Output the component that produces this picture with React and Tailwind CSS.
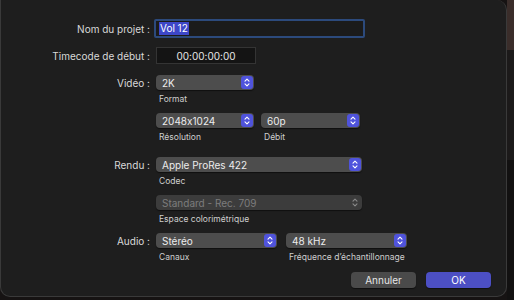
import React from 'react';

const font = { fontFamily: 'Inter, "Liberation Sans", sans-serif', fontFeatureSettings: '"calt" 0' };

// Petit bouton bleu avec les deux chevrons (haut / bas)
const Stepper = ({ disabled }) => (
  <span
    className={
      disabled
        ? 'w-[12px] h-[13px] flex items-center justify-center'
        : 'w-[12px] h-[13px] rounded-[3px] bg-[#4f53dc] flex items-center justify-center'
    }
  >
    <svg width="6" height="9" viewBox="0 0 6 9" fill="none">
      <path
        d="M1 3.2 L3 1.2 L5 3.2 M1 5.8 L3 7.8 L5 5.8"
        stroke={disabled ? '#8a8a8a' : '#ffffff'}
        strokeWidth="1.1"
        strokeLinecap="round"
        strokeLinejoin="round"
      />
    </svg>
  </span>
);

const Popup = ({ value, width, disabled }) => (
  <div
    className={`h-[15px] rounded-[4px] flex items-center justify-between pl-[6px] pr-[1px] shadow-[0_1px_1px_rgba(0,0,0,0.5)] ${width} ${
      disabled ? 'bg-[#3c3c3c]' : 'bg-[#4d4d4d]'
    }`}
  >
    <span className={`text-[10px] leading-none ${disabled ? 'text-[#7d7d7d]' : 'text-[#ececec]'}`}>
      {value}
    </span>
    <Stepper disabled={disabled} />
  </div>
);

const Caption = ({ children }) => (
  <div className="h-[9px] text-[8.5px] leading-[9px] text-[#cfcfcf] pl-[3px] mt-[5px]">{children}</div>
);

const Label = ({ children }) => (
  <div className="w-[150px] pr-[1px] text-right text-[10px] leading-none text-[#d9d9d9]">{children}</div>
);

export default function App() {
  return (
    <div className="w-[514px] h-[300px] bg-[#161313] flex" style={font}>
      <div className="w-[507px] h-[297px] bg-[#1e1e1e] rounded-b-[10px] rounded-tr-[10px] border-x border-b border-[#3a3a3a] flex flex-col shrink-0">
        {/* Nom du projet */}
        <div className="flex items-center gap-[3px] mt-[19px]">
          <Label>Nom du projet :</Label>
          <div className="w-[211px] h-[19px] border-2 border-[#2c4a7c] rounded-[2px] bg-[#1b1b1b] flex items-center pl-[3px]">
            <span className="bg-[#3d47c8] text-[10px] leading-[13px] text-white px-[1px]">Vol 12</span>
          </div>
        </div>

        {/* Timecode */}
        <div className="flex items-center gap-[5px] mt-[9px]">
          <Label>Timecode de début :</Label>
          <div className="w-[100px] h-[17px] border border-[#343434] bg-[#141414] flex items-center justify-center text-[10px] leading-none text-[#e6e6e6]">
            00:00:00:00
          </div>
        </div>

        {/* Vidéo */}
        <div className="flex mt-[11px] gap-[5px]">
          <div className="h-[15px] flex items-center">
            <Label>Vidéo :</Label>
          </div>
          <div className="flex flex-col">
            <Popup value="2K" width="w-[98px]" />
            <Caption>Format</Caption>
            <div className="flex gap-[7px] mt-[9px]">
              <div className="flex flex-col">
                <Popup value="2048x1024" width="w-[98px]" />
                <Caption>Résolution</Caption>
              </div>
              <div className="flex flex-col">
                <Popup value="60p" width="w-[99px]" />
                <Caption>Débit</Caption>
              </div>
            </div>
          </div>
        </div>

        {/* Rendu */}
        <div className="flex mt-[15px] gap-[5px]">
          <div className="h-[15px] flex items-center">
            <Label>Rendu :</Label>
          </div>
          <div className="flex flex-col">
            <Popup value="Apple ProRes 422" width="w-[206px]" />
            <Caption>Codec</Caption>
            <div className="mt-[9px] flex flex-col">
              <Popup value="Standard - Rec. 709" width="w-[206px]" disabled />
              <Caption>Espace colorimétrique</Caption>
            </div>
          </div>
        </div>

        {/* Audio */}
        <div className="flex mt-[9px] gap-[5px]">
          <div className="h-[15px] flex items-center">
            <Label>Audio :</Label>
          </div>
          <div className="flex gap-[9px]">
            <div className="flex flex-col">
              <Popup value="Stéréo" width="w-[121px]" />
              <Caption>Canaux</Caption>
            </div>
            <div className="flex flex-col">
              <Popup value="48 kHz" width="w-[121px]" />
              <Caption>Fréquence d’échantillonnage</Caption>
            </div>
          </div>
        </div>

        {/* Boutons */}
        <div className="flex justify-end gap-[10px] pr-[15px] mt-[10px]">
          <button className="w-[65px] h-[16px] rounded-[4px] bg-[#4a4a4a] text-[10px] leading-none text-[#e6e6e6] shadow-[0_1px_1px_rgba(0,0,0,0.5)]">
            Annuler
          </button>
          <button className="w-[65px] h-[16px] rounded-[4px] bg-[#4c4fc4] text-[10px] leading-none text-white shadow-[0_1px_1px_rgba(0,0,0,0.5)]">
            OK
          </button>
        </div>
      </div>
      <div className="flex-1 flex flex-col">
        <div className="h-[50px] bg-[#3a2d2a]" />
        <div className="h-[110px] bg-[#1c1a1a]" />
        <div className="flex-1 bg-[#121111]" />
      </div>
    </div>
  );
}
